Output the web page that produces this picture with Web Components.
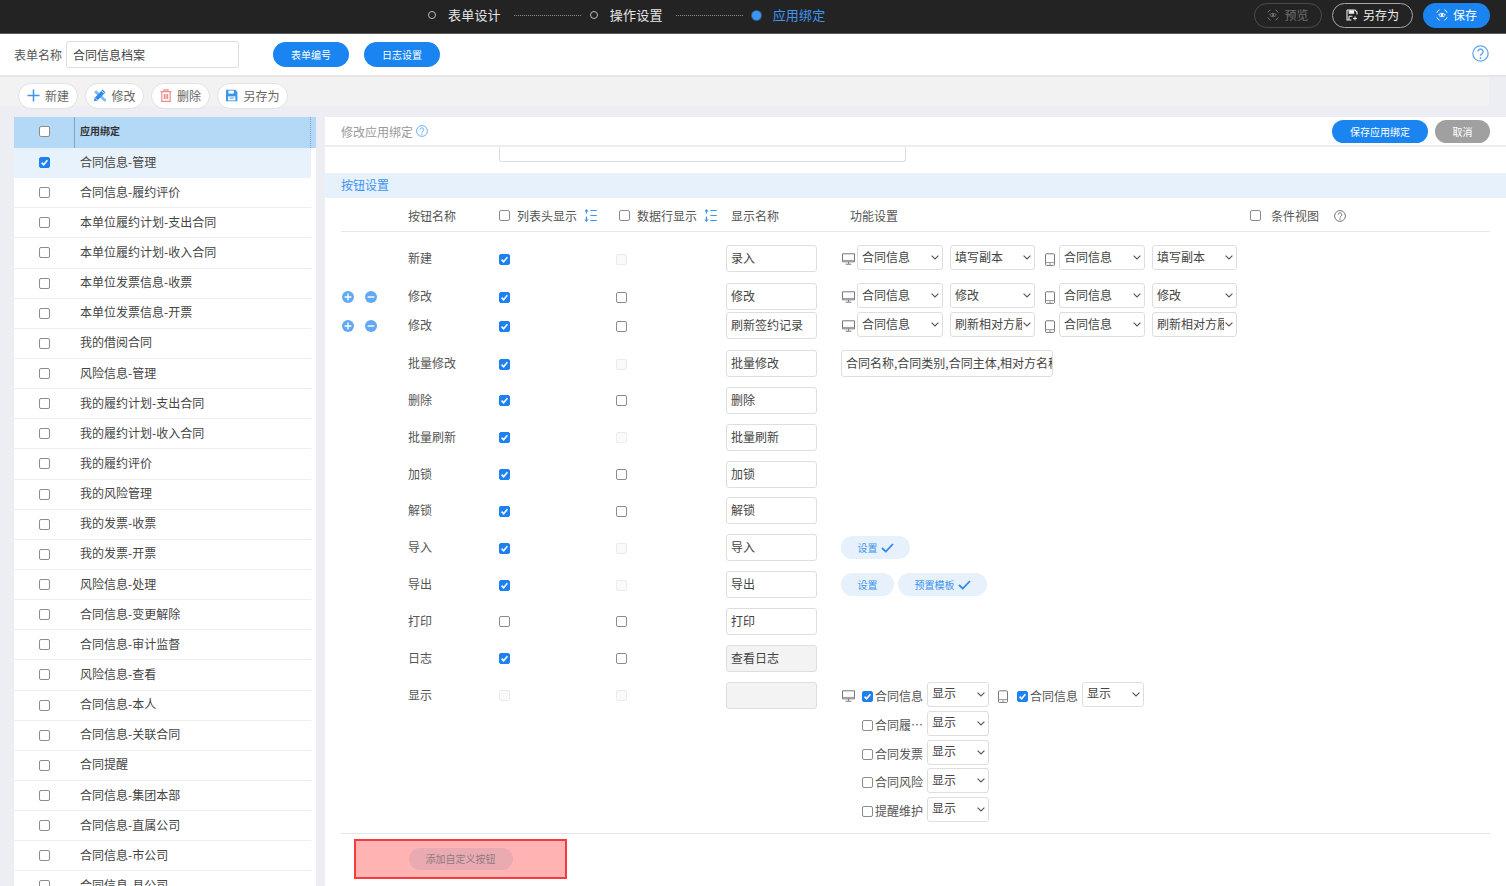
<!DOCTYPE html>
<html lang="zh">
<head>
<meta charset="utf-8">
<title>应用绑定</title>
<style>
  html, body { margin: 0; padding: 0; overflow: hidden; }
  body { font-family: "Noto Sans CJK SC", "Liberation Sans", sans-serif; font-size: 12px; color: #555; background: #eceef3; }
</style>
</head>
<body>
<app-shell></app-shell>

<script>
const ICONS = {
  plus: `<svg width="13" height="13" viewBox="0 0 13 13"><path d="M6.5 0.5v12M0.5 6.5h12" stroke="#3d94ee" stroke-width="1.5" fill="none"/></svg>`,
  edit: `<svg width="13" height="13" viewBox="0 0 13 13"><path d="M1.2 3.2l2-2 10 9.6-.4 1.8-1.8-.3z" fill="#7cb8f5"/><path d="M9.6.6l2.8 2.8-8 8-3.6.9.9-3.6z" fill="#2f8cee"/><path d="M8.6 1.8l2.6 2.6M2.6 9.4l1.4 1.4" stroke="#fff" stroke-width=".9" fill="none"/></svg>`,
  trash: `<svg width="12" height="13" viewBox="0 0 12 13" fill="none" stroke="#f08c8c" stroke-width="1.2"><path d="M0.5 2.6h11M4 2.4V.8h4v1.6M1.8 2.8v9.6h8.4V2.8"/><path d="M4.4 5v5M6 5v5M7.6 5v5"/></svg>`,
  save: `<svg width="13" height="13" viewBox="0 0 13 13"><path d="M1 .8h9.2L12.4 3v9.2H1z" fill="#3d94ee"/><path d="M3.4 1.6h5.4v3H3.4z" fill="#fff"/><path d="M3 7.4h7.4v4H3z" fill="#fff"/><path d="M4.4 9h4.6" stroke="#3d94ee"/></svg>`,
  saveLine: `<svg width="12" height="12" viewBox="0 0 12 12" fill="none" stroke="#eee" stroke-width="1.1"><path d="M1 1h8l2 2v2.6M5.4 11H1V1"/><path d="M3.2 1.2v3h4.4v-3" fill="#eee"/><path d="M3 7.2h3.4M3 7.2V11"/><path d="M9 7.4v4M7 9.4h4" stroke-width="1"/></svg>`,
  eye: `<svg width="12" height="12" viewBox="0 0 12 12" fill="none" stroke="currentColor" stroke-width="1"><path d="M.8 3.6A5.6 5.6 0 0 1 3.6.8M8.4.8a5.6 5.6 0 0 1 2.8 2.8M11.2 8.4a5.6 5.6 0 0 1-2.8 2.8M3.6 11.2A5.6 5.6 0 0 1 .8 8.4"/><path d="M2.6 6C4.4 3.8 7.6 3.8 9.4 6 7.6 8.2 4.4 8.2 2.6 6z"/><circle cx="6" cy="6" r="1.2" fill="currentColor" stroke="none"/></svg>`,
  sort: `<svg width="13" height="13" viewBox="0 0 13 13" fill="none" stroke="#3d94ee" stroke-width="1.2"><path d="M2.5 1v11" stroke-dasharray="3.5 3"/><path d="M2.5 0L.4 2.6h4.2z M2.5 13L.4 10.4h4.2z" fill="#3d94ee" stroke="none"/><path d="M6.4 1.5h6.4M6.4 6.5h6.4M6.4 11.5h6.4"/></svg>`,
  help: (size, color) => `<svg width="${size}" height="${size}" viewBox="0 0 16 16" fill="none" stroke="${color}" stroke-width="1.2"><circle cx="8" cy="8" r="7.2"/><path d="M5.6 6.2a2.4 2.4 0 1 1 3.6 2.1c-.8.5-1.2.9-1.2 1.9" stroke-width="1.3"/><circle cx="8" cy="12.2" r=".9" fill="${color}" stroke="none"/></svg>`,
  monitor: `<svg width="13" height="12" viewBox="0 0 13 12" fill="none" stroke="#777" stroke-width="1"><path d="M.5.8h12v8h-12z"/><path d="M.5 7.4h12" stroke="#999"/><path d="M6.5 8.8v2M3.6 11.2h5.8"/></svg>`,
  mobile: `<svg width="10" height="13" viewBox="0 0 10 13" fill="none" stroke="#777" stroke-width="1"><rect x=".5" y=".8" width="9" height="11.6" rx="1"/><path d="M.5 9.6h9M5 9.6v2.8" stroke="#999"/></svg>`,
  plusRound: `<svg width="12" height="12" viewBox="0 0 12 12"><circle cx="6" cy="6" r="6" fill="#62a8f3"/><path d="M6 2.6v6.8M2.6 6h6.8" stroke="#fff" stroke-width="1.4"/></svg>`,
  minusRound: `<svg width="12" height="12" viewBox="0 0 12 12"><circle cx="6" cy="6" r="6" fill="#62a8f3"/><path d="M2.6 6h6.8" stroke="#fff" stroke-width="1.4"/></svg>`,
  tick: `<svg width="13" height="10" viewBox="0 0 13 10" fill="none" stroke="#2a8af0" stroke-width="1.8"><path d="M1 5l3.8 3.6L12 1"/></svg>`,
  chevron: `<svg width="8" height="5" viewBox="0 0 8 5" fill="none" stroke="#555" stroke-width="1.1"><path d="M.6.6L4 4l3.4-3.4"/></svg>`,
};

class CheckBox extends HTMLElement {
  constructor() {
    super();
    const mark = this.hasAttribute("checked")
      ? `<svg width="11" height="11" viewBox="0 0 11 11" fill="none" stroke="#fff" stroke-width="1.6"><path d="M2.6 5.6l2 2.1 3.8-4.4"/></svg>`
      : "";
    this.attachShadow({ mode: "open" });
    this.shadowRoot.innerHTML = `
      <style>
        :host {
          display: inline-flex;
          width: 11px;
          height: 11px;
          box-sizing: border-box;
          border: 1px solid #8c8c8c;
          border-radius: 2px;
          background: #fff;
          align-items: center;
          justify-content: center;
          flex: none;
        }
        :host([checked]) {
          background: #1f80ef;
          border-color: #1f80ef;
        }
        :host([disabled]) {
          background: #fafafa;
          border-color: #ececec;
        }
        svg {
          display: block;
          margin: -1px;
        }
      </style>
      ${mark}
    `;
  }
}
customElements.define("check-box", CheckBox);

class PillButton extends HTMLElement {
  constructor() {
    super();
    this.attachShadow({ mode: "open" });
    this.shadowRoot.innerHTML = `
      <style>
        :host {
          display: inline-flex;
          align-items: center;
          justify-content: center;
          gap: 3px;
          box-sizing: border-box;
          height: 25px;
          border-radius: 13px;
          font-size: 10px;
          background: #1a85f0;
          color: #fff;
          white-space: nowrap;
          flex: none;
        }
        :host([kind="light"]) {
          height: 23px;
          background: #e7f1fb;
          color: #3d94ee;
        }
        :host([kind="grey"]) {
          background: #a0a0a0;
        }
      </style>
      <slot></slot>
    `;
  }
}
customElements.define("pill-button", PillButton);

class TextBox extends HTMLElement {
  constructor() {
    super();
    this.attachShadow({ mode: "open" });
    this.shadowRoot.innerHTML = `
      <style>
        :host {
          display: flex;
          align-items: center;
          box-sizing: border-box;
          width: 91px;
          height: 27px;
          padding: 0 4px 2px;
          border: 1px solid #dedede;
          border-radius: 3px;
          background: #fff;
          font-size: 12px;
          color: #444;
          white-space: nowrap;
          overflow: hidden;
          flex: none;
        }
        :host([disabled]) {
          background: #f3f3f3;
        }
      </style>
      <slot></slot>
    `;
  }
}
customElements.define("text-box", TextBox);

class PickBox extends HTMLElement {
  constructor() {
    super();
    this.attachShadow({ mode: "open" });
    this.shadowRoot.innerHTML = `
      <style>
        :host {
          display: flex;
          align-items: center;
          box-sizing: border-box;
          height: 25px;
          padding: 0 3px 0 4px;
          border: 1px solid #dedede;
          border-radius: 3px;
          background: #fff;
          font-size: 12px;
          color: #444;
          flex: none;
        }
        span {
          flex: 1;
          min-width: 0;
          overflow: hidden;
          white-space: nowrap;
          line-height: 22px;
          margin-top: -2px;
        }
        svg {
          flex: none;
          margin-left: 1px;
          display: block;
        }
      </style>
      <span><slot></slot></span>
      ${ICONS.chevron}
    `;
  }
}
customElements.define("pick-box", PickBox);

class TopBar extends HTMLElement {
  constructor() {
    super();
    this.attachShadow({ mode: "open" });
    this.shadowRoot.innerHTML = `
      <style>
        :host {
          display: flex;
          align-items: center;
          box-sizing: border-box;
          height: 34px;
          padding: 0 16px 0 428px;
          background: #232323;
          border-bottom: 1px solid #5a5a5a;
          color: #e6e6e6;
          font-size: 13px;
        }
        .dot {
          width: 8px;
          height: 8px;
          box-sizing: border-box;
          border: 1.5px solid #bdbdbd;
          border-radius: 50%;
          margin-right: 12px;
          flex: none;
          margin-top: -3px;
        }
        .dot.on {
          width: 9px;
          height: 9px;
          border: 0;
          background: #3f95f2;
          box-shadow: 0 0 0 1px #2c5b8c;
          margin-right: 12px;
        }
        .step {
          margin-right: 13px;
          line-height: 30px;
          margin-top: -4px;
          letter-spacing: .2px;
        }
        .step.on {
          color: #3f95f2;
          margin-right: 0;
        }
        .line {
          width: 67px;
          border-top: 1px dotted #8a8a8a;
          margin-right: 9px;
          flex: none;
          margin-top: -2px;
        }
        .acts {
          margin-left: auto;
          display: flex;
          gap: 10px;
          margin-top: -3px;
        }
        pill-button {
          font-size: 12px;
          gap: 5px;
          padding-bottom: 2px;
        }
        pill-button svg {
          margin-top: 2px;
        }
        .ghost {
          width: 68px;
          background: transparent;
          border: 1px solid #4a4a4a;
          color: #707070;
        }
        .outline {
          width: 81px;
          background: transparent;
          border: 1px solid #a8a8a8;
          color: #eee;
        }
        .solid {
          width: 67px;
        }
      </style>
      <span class="dot"></span><span class="step">表单设计</span><span class="line"></span>
      <span class="dot"></span><span class="step">操作设置</span><span class="line"></span>
      <span class="dot on"></span><span class="step on">应用绑定</span>
      <div class="acts">
        <pill-button class="ghost">${ICONS.eye}预览</pill-button>
        <pill-button class="outline">${ICONS.saveLine}另存为</pill-button>
        <pill-button class="solid">${ICONS.eye}保存</pill-button>
      </div>
    `;
  }
}
customElements.define("top-bar", TopBar);

class FormBar extends HTMLElement {
  constructor() {
    super();
    this.attachShadow({ mode: "open" });
    this.shadowRoot.innerHTML = `
      <style>
        :host {
          display: flex;
          align-items: center;
          box-sizing: border-box;
          height: 41px;
          padding: 0 17px 0 14px;
          background: #fff;
          font-size: 12px;
          color: #555;
        }
        label {
          margin-right: 4px;
        }
        text-box {
          width: 173px;
          height: 27px;
          padding: 0 6px 1px;
          margin-right: 34px;
        }
        pill-button {
          width: 76px;
          margin-right: 15px;
        }
        .help {
          margin-left: auto;
          display: block;
        }
      </style>
      <label>表单名称</label>
      <text-box>合同信息档案</text-box>
      <pill-button>表单编号</pill-button>
      <pill-button>日志设置</pill-button>
      <span class="help">${ICONS.help(17, "#5ba7f5")}</span>
    `;
  }
}
customElements.define("form-bar", FormBar);

class ToolBar extends HTMLElement {
  constructor() {
    super();
    this.attachShadow({ mode: "open" });
    this.shadowRoot.innerHTML = `
      <style>
        :host {
          display: block;
          box-sizing: border-box;
          height: 42px;
          background: #eceef3;
          border-top: 2px solid #e6e6e6;
        }
        .inner {
          display: flex;
          gap: 7px;
          box-sizing: border-box;
          height: 29px;
          padding: 6px 0 0 18px;
          margin-right: 17px;
          background: #f2f2f2;
        }
        button {
          all: unset;
          display: flex;
          align-items: center;
          justify-content: center;
          gap: 5px;
          box-sizing: border-box;
          height: 26px;
          padding-bottom: 1px;
          border: 1px solid #e3e3e3;
          border-radius: 14px;
          background: #fff;
          color: #666;
          font: 12px "Noto Sans CJK SC", sans-serif;
        }
      </style>
      <div class="inner">
        <button style="width:60px">${ICONS.plus}新建</button>
        <button style="width:59px">${ICONS.edit}修改</button>
        <button style="width:59px">${ICONS.trash}删除</button>
        <button style="width:71px">${ICONS.save}另存为</button>
      </div>
    `;
  }
}
customElements.define("tool-bar", ToolBar);

const listNames = [
  "合同信息-管理", "合同信息-履约评价", "本单位履约计划-支出合同", "本单位履约计划-收入合同",
  "本单位发票信息-收票", "本单位发票信息-开票", "我的借阅合同", "风险信息-管理",
  "我的履约计划-支出合同", "我的履约计划-收入合同", "我的履约评价", "我的风险管理",
  "我的发票-收票", "我的发票-开票", "风险信息-处理", "合同信息-变更解除",
  "合同信息-审计监督", "风险信息-查看", "合同信息-本人", "合同信息-关联合同",
  "合同提醒", "合同信息-集团本部", "合同信息-直属公司", "合同信息-市公司", "合同信息-县公司",
];

class SideList extends HTMLElement {
  constructor() {
    super();
    const rows = listNames
      .map((name, i) => `
        <div class="row ${i === 0 ? "on" : ""}">
          <span class="cb"><check-box ${i === 0 ? "checked" : ""}></check-box></span>
          <span>${name}</span>
        </div>`)
      .join("");
    this.attachShadow({ mode: "open" });
    this.shadowRoot.innerHTML = `
      <style>
        :host {
          display: block;
          width: 302px;
          height: 100%;
          overflow: hidden;
          background: #fff;
          flex: none;
          font-size: 12px;
          color: #444;
        }
        .head {
          display: flex;
          align-items: center;
          height: 31px;
          background: #b3d9f7;
          color: #333;
          font-size: 10px;
          font-weight: 700;
        }
        .head .cb {
          width: 61px;
          height: 100%;
          margin-right: 0;
          border-right: 1px solid #7ea6cc;
          padding-bottom: 3px;
          box-sizing: border-box;
        }
        .head .name {
          flex: 1;
          padding-left: 5px;
          height: 100%;
          display: flex;
          align-items: center;
          margin-top: -4px;
        }
        .head .end {
          width: 5px;
          height: 100%;
          border-left: 1px dotted #7ea6cc;
        }
        .cb {
          width: 60px;
          margin-right: 6px;
          display: flex;
          align-items: center;
          justify-content: center;
          flex: none;
        }
        .row {
          display: flex;
          align-items: center;
          box-sizing: border-box;
          height: 30.15px;
          width: 297px;
          border-bottom: 1px solid #eeeeee;
        }
        .row span:last-child {
          margin-top: -3px;
        }
        .row.on {
          background: #e8f2fc;
          border-bottom-color: #e8f2fc;
        }
      </style>
      <div class="head">
        <span class="cb"><check-box></check-box></span>
        <span class="name">应用绑定</span>
        <span class="end"></span>
      </div>
      ${rows}
    `;
  }
}
customElements.define("side-list", SideList);

class SetRow extends HTMLElement {
  constructor() {
    super();
    this.attachShadow({ mode: "open" });
    this.shadowRoot.innerHTML = `
      <style>
        :host {
          display: grid;
          grid-template-columns: 67px 91px 117px 110px 115px 1fr;
          box-sizing: border-box;
          height: var(--row-h, 36.85px);
          padding-top: var(--row-top, 6px);
          font-size: 12px;
          color: #555;
        }
        .ops {
          display: flex;
          align-items: center;
          gap: 11px;
          height: 28px;
          padding-left: 1px;
        }
        .name {
          display: flex;
          align-items: center;
          height: 27px;
          margin-top: -1px;
        }
        .cb {
          display: flex;
          align-items: center;
          height: 28px;
        }
      </style>
      <div class="ops"><slot name="ops"></slot></div>
      <div class="name"><slot name="name"></slot></div>
      <div class="cb"><slot name="a"></slot></div>
      <div class="cb"><slot name="b"></slot></div>
      <div><slot name="field"></slot></div>
      <div><slot name="func"></slot></div>
    `;
  }
}
customElements.define("set-row", SetRow);

class FuncPicks extends HTMLElement {
  constructor() {
    super();
    const [a, b] = [this.getAttribute("a"), this.getAttribute("b")];
    this.attachShadow({ mode: "open" });
    this.shadowRoot.innerHTML = `
      <style>
        :host {
          display: flex;
          align-items: center;
          height: 25px;
        }
        .m {
          width: 15px;
          display: flex;
          margin: 3px 0 0 1px;
        }
        .p {
          width: 14px;
          margin: 3px 0 0 10px;
          display: flex;
        }
        .one { width: 86px; }
        .two { width: 85px; margin-left: 7px; }
      </style>
      <span class="m">${ICONS.monitor}</span>
      <pick-box class="one">合同信息</pick-box>
      <pick-box class="two">${a}</pick-box>
      <span class="p">${ICONS.mobile}</span>
      <pick-box class="one">合同信息</pick-box>
      <pick-box class="two">${b}</pick-box>
    `;
  }
}
customElements.define("func-picks", FuncPicks);

class ShowPicks extends HTMLElement {
  constructor() {
    super();
    const subs = ["合同履…", "合同发票", "合同风险", "提醒维护"]
      .map((t) => `
        <div class="line">
          <check-box></check-box><span class="t">${t}</span>
          <pick-box>显示</pick-box>
        </div>`)
      .join("");
    this.attachShadow({ mode: "open" });
    this.shadowRoot.innerHTML = `
      <style>
        :host {
          display: block;
          font-size: 12px;
          color: #555;
        }
        .line {
          display: flex;
          align-items: flex-start;
          height: 28.6px;
          padding-left: 21px;
        }
        .line.first {
          height: 29.4px;
          padding-left: 1px;
        }
        .icon {
          display: flex;
          margin-top: 8px;
        }
        .t {
          width: 47px;
          margin-left: 2px;
          white-space: nowrap;
          line-height: 25px;
          margin-top: 1px;
        }
        check-box { margin-top: 9px; }
        pick-box {
          width: 62px;
          margin-left: 5px;
        }
      </style>
      <div class="line first">
        <span class="icon" style="width:19px">${ICONS.monitor}</span>
        <check-box checked style="margin-left:1px"></check-box><span class="t">合同信息</span>
        <pick-box>显示</pick-box>
        <span class="icon" style="margin-left:9px;width:19px">${ICONS.mobile}</span>
        <check-box checked></check-box><span class="t">合同信息</span>
        <pick-box>显示</pick-box>
      </div>
      ${subs}
    `;
  }
}
customElements.define("show-picks", ShowPicks);

const setRows = [
  { name: "新建", a: 1, b: "off", field: "录入", func: `<func-picks a="填写副本" b="填写副本"></func-picks>`, h: 38 },
  { name: "修改", ops: 1, a: 1, b: 0, field: "修改", func: `<func-picks a="修改" b="修改"></func-picks>`, h: 32 },
  { name: "修改", ops: 1, a: 1, b: 0, field: "刷新签约记录", func: `<func-picks a="刷新相对方履约" b="刷新相对方履约"></func-picks>`, h: 35, top: 3 },
  { name: "批量修改", a: 1, b: "off", field: "批量修改", func: `<text-box class="long">合同名称,合同类别,合同主体,相对方名称</text-box>` },
  { name: "删除", a: 1, b: 0, field: "删除" },
  { name: "批量刷新", a: 1, b: "off", field: "批量刷新" },
  { name: "加锁", a: 1, b: 0, field: "加锁" },
  { name: "解锁", a: 1, b: 0, field: "解锁" },
  { name: "导入", a: 1, b: "off", field: "导入", func: `<div class="pills"><pill-button kind="light" style="width:69px">设置${ICONS.tick}</pill-button></div>` },
  { name: "导出", a: 1, b: "off", field: "导出", func: `<div class="pills"><pill-button kind="light" style="width:53px">设置</pill-button><pill-button kind="light" style="width:89px">预置模板${ICONS.tick}</pill-button></div>` },
  { name: "打印", a: 0, b: 0, field: "打印" },
  { name: "日志", a: 1, b: 0, field: "查看日志", lock: 1 },
  { name: "显示", a: "off", b: "off", field: "", lock: 1, func: `<show-picks></show-picks>`, h: 157.35 },
];

function boxFor(value, slot) {
  const state = value === "off" ? "disabled" : value ? "checked" : "";
  return `<check-box slot="${slot}" ${state}></check-box>`;
}

class BindPanel extends HTMLElement {
  constructor() {
    super();
    const rows = setRows
      .map((r) => `
        <set-row style="${r.h ? `--row-h:${r.h}px;` : ""}${r.top !== undefined ? `--row-top:${r.top}px;` : ""}">
          ${r.ops ? `<span slot="ops" class="op">${ICONS.plusRound}</span><span slot="ops" class="op">${ICONS.minusRound}</span>` : ""}
          <span slot="name">${r.name}</span>
          ${boxFor(r.a, "a")}
          ${boxFor(r.b, "b")}
          <text-box slot="field" ${r.lock ? "disabled" : ""}>${r.field}</text-box>
          ${r.func ? `<div slot="func">${r.func}</div>` : ""}
        </set-row>`)
      .join("");
    this.attachShadow({ mode: "open" });
    this.shadowRoot.innerHTML = `
      <style>
        :host {
          display: block;
          flex: 1;
          min-width: 0;
          height: 100%;
          overflow: hidden;
          background: #fff;
          font-size: 12px;
          color: #555;
        }
        .bar {
          display: flex;
          align-items: center;
          gap: 7px;
          box-sizing: border-box;
          height: 30px;
          padding: 0 16px;
          border-bottom: 2px solid #eee;
          color: #999;
        }
        .bar svg { display: block; }
        .bar pill-button { height: 23px; }
        .bar .title { display: flex; align-items: center; gap: 3px; margin-right: auto; }
        .peek {
          box-sizing: border-box;
          width: 407px;
          height: 15px;
          margin-left: 174px;
          border: 1px solid #ddd;
          border-top: 0;
          border-radius: 0 0 3px 3px;
        }
        .band {
          height: 25px;
          margin-top: 11px;
          padding-left: 16px;
          line-height: 24px;
          background: #e7f1fb;
          color: #3d94ee;
        }
        .body { padding: 0 16px; }
        .heads {
          display: grid;
          grid-template-columns: 67px 91px 117px 110px 119px 1fr;
          align-items: center;
          height: 33px;
          border-bottom: 1px solid #e8e8e8;
          margin-bottom: 7px;
        }
        .heads > div { display: flex; align-items: center; white-space: nowrap; margin-top: 2px; }
        .heads .n { grid-column: 2; }
        .heads check-box { margin-right: 7px; }
        .heads svg { display: block; margin-left: 7px; }
        .op { display: block; }
        .op svg { display: block; }
        .pills { display: flex; gap: 4px; margin-top: 2px; }
        .long { width: 212px; }
        .foot {
          border-top: 1px solid #e4e4e4;
          padding: 5px 0 0 13px;
        }
        .mark {
          display: flex;
          align-items: center;
          justify-content: center;
          box-sizing: border-box;
          width: 213px;
          height: 40px;
          border: 2px solid #f43c3c;
          background: #ffb3b3;
        }
        .mark pill-button {
          width: 104px;
          height: 22px;
          background: #e9aab2;
          color: #8f7a7e;
        }
      </style>
      <div class="bar">
        <span class="title">修改应用绑定 ${ICONS.help(12, "#5ba7f5")}</span>
        <pill-button style="width:96px">保存应用绑定</pill-button>
        <pill-button kind="grey" style="width:55px">取消</pill-button>
      </div>
      <div class="peek"></div>
      <div class="band">按钮设置</div>
      <div class="body">
        <div class="heads">
          <div class="n">按钮名称</div>
          <div><check-box></check-box>列表头显示${ICONS.sort}</div>
          <div style="margin-left:3px"><check-box></check-box>数据行显示${ICONS.sort}</div>
          <div style="padding-left:5px">显示名称</div>
          <div style="padding-left:5px;padding-right:144px">功能设置
            <span style="display:flex;align-items:center;margin-left:auto"><check-box style="margin-right:10px"></check-box>条件视图<span style="margin-left:8px;display:flex">${ICONS.help(12, "#666")}</span></span>
          </div>
        </div>
        ${rows}
        <div class="foot">
          <div class="mark"><pill-button>添加自定义按钮</pill-button></div>
        </div>
      </div>
    `;
  }
}
customElements.define("bind-panel", BindPanel);

class AppShell extends HTMLElement {
  constructor() {
    super();
    this.attachShadow({ mode: "open" });
    this.shadowRoot.innerHTML = `
      <style>
        :host {
          display: block;
          width: 1506px;
          height: 886px;
          overflow: hidden;
          background: #eceef3;
        }
        main {
          display: flex;
          gap: 9px;
          height: 769px;
          padding-left: 14px;
        }
      </style>
      <top-bar></top-bar>
      <form-bar></form-bar>
      <tool-bar></tool-bar>
      <main>
        <side-list></side-list>
        <bind-panel></bind-panel>
      </main>
    `;
  }
}
customElements.define("app-shell", AppShell);
</script>
</body>
</html>
